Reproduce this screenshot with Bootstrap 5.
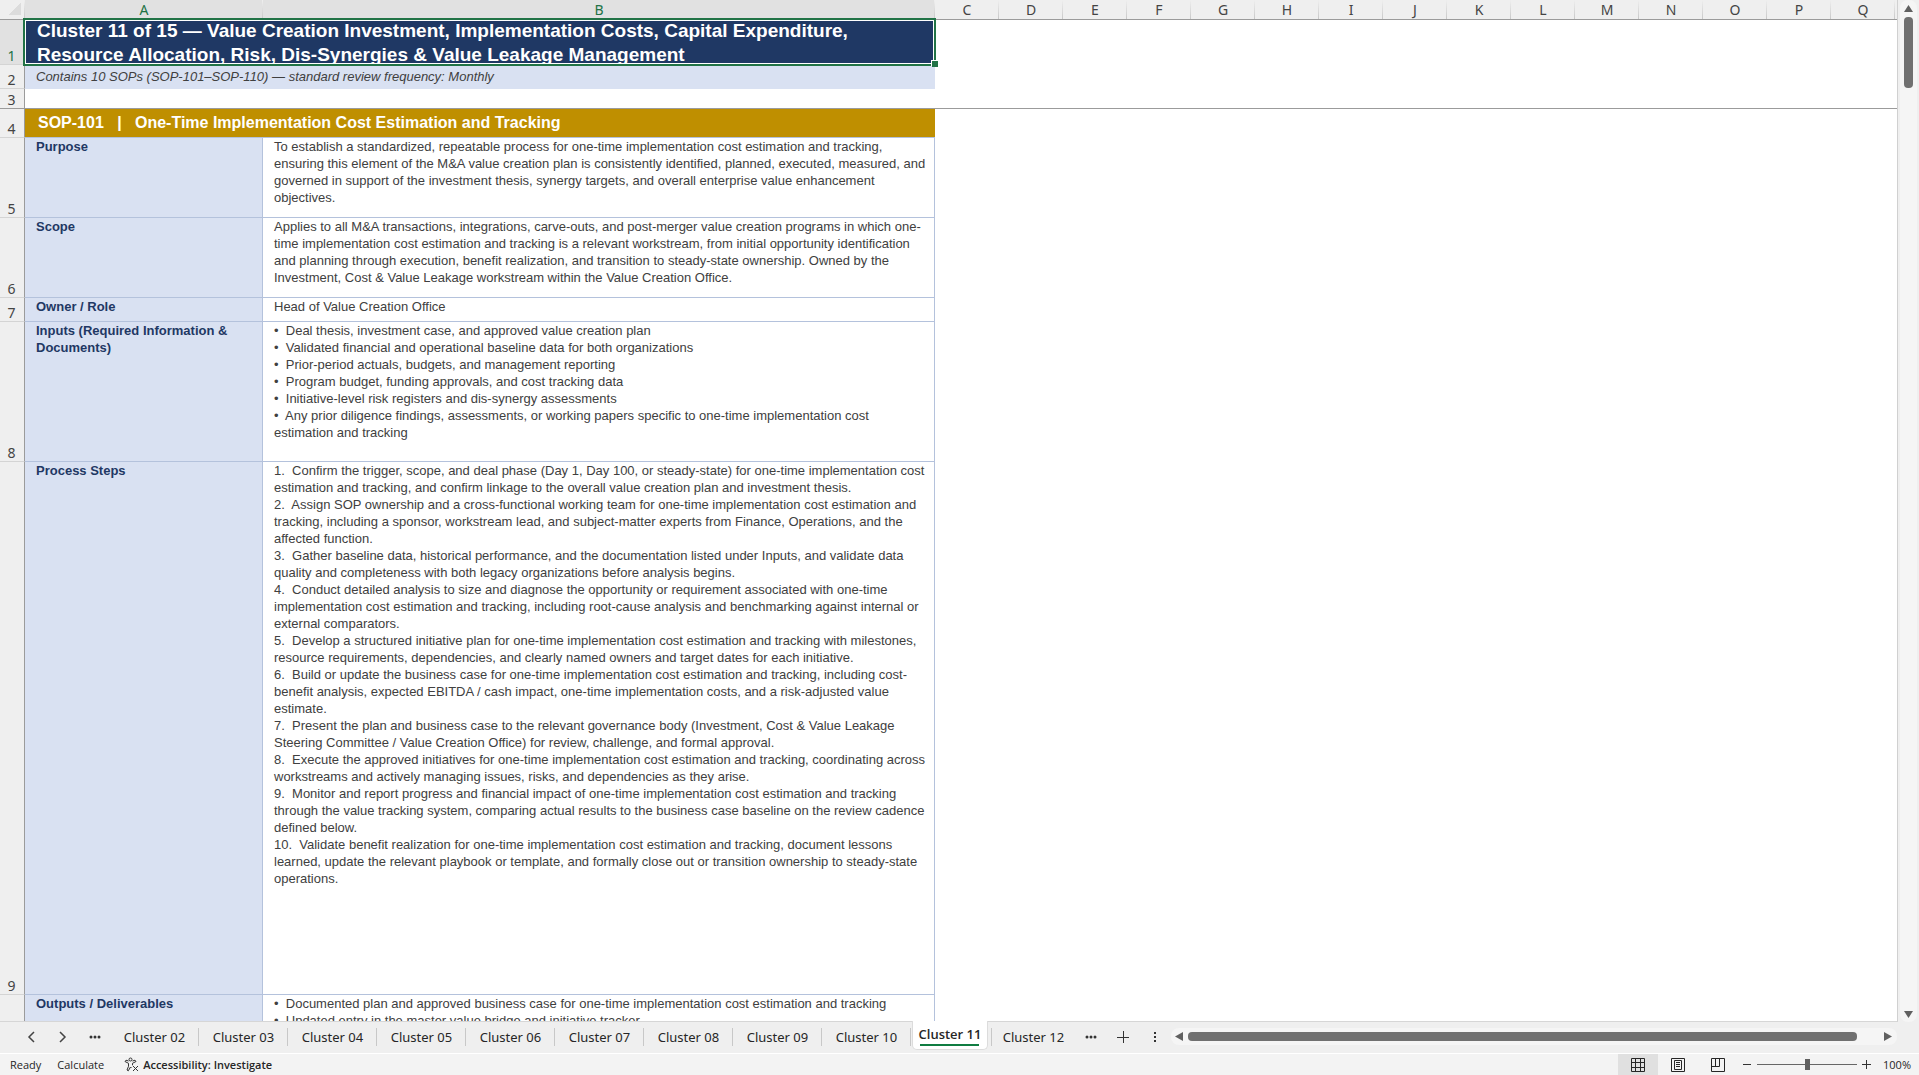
<!DOCTYPE html>
<html lang="en">
<head>
<meta charset="utf-8">
<meta name="viewport" content="width=device-width, initial-scale=1">
<title>Cluster 11</title>
<link href="https://cdn.jsdelivr.net/npm/bootstrap@5.3.0/dist/css/bootstrap.min.css" rel="stylesheet">
<style>
  :root { --ui: "Noto Sans", "Open Sans", sans-serif; --cell: "Liberation Sans", Arial, sans-serif; --line: #b4c2dc; --chrome: #efefef; --green: #217346; }
  body { font-family: var(--ui); background: var(--chrome); color: #262626; }
  .workspace { min-height: 0; }
  .sheet-view { min-height: 0; min-width: 0; background: #fff; border-right: 1px solid #d0d0d0; border-bottom: 1px solid #d6d6d6; }
  .sheet { --bs-table-bg: transparent; table-layout: fixed; border-collapse: separate; border-spacing: 0; margin: 0; width: 100%; color: #404040; font: 13px/17px var(--cell); }
  .sheet > :not(caption) > * > * { padding: 0; border: 0; vertical-align: top; }
  .sheet .num-col { width: 25px; } .sheet .a-col { width: 238px; } .sheet .b-col { width: 672px; } .sheet .std-col { width: 64px; }
  .sheet > thead > tr > th { height: 20px; padding-top: 1px; font: 14px/17px var(--ui); text-align: center; color: #444; border-bottom: 1px solid #9b9b9b; background: linear-gradient(#efefef, #c8c8c8) right / 1px 100% no-repeat var(--chrome); }
  .sheet > thead > tr > th.picked { background-color: #e1e1e1; color: var(--green); }
  .sheet > thead > tr > th:last-child { background-image: none; }
  .sheet > tbody > tr > th { font: 14px/17px var(--ui); text-align: center; vertical-align: bottom; padding: 0 1px 0 0; color: #444; background: var(--chrome); border-right: 1px solid #9b9b9b; border-bottom: 1px solid #d4d4d4; }
  .sheet > tbody > tr > th.picked { background: #e1e1e1; color: var(--green); }
  .corner { display: block; width: 12px; height: 12px; margin: 2px 0 0 9px; background: linear-gradient(135deg, transparent 50%, #dcdcdc 50%); }
  .sheet > tbody > tr > td.tag { padding-left: 11px; background: #d9e1f2; color: #1f3864; font-weight: 700; border-right: 1px solid var(--line); border-bottom: 1px solid var(--line); }
  .sheet > tbody > tr > td.info { padding-left: 11px; white-space: pre; border-right: 1px solid var(--line); border-bottom: 1px solid var(--line); }
  .sheet > tbody > tr > td.heading { position: relative; background: #1f3864; }
  .heading-text { height: 43px; padding-left: 12px; overflow: hidden; color: #fff; font: 700 19px/24px var(--cell); }
  .heading-text span { display: block; margin-top: -1px; white-space: pre; }
  .selection { position: absolute; inset: -2px -1px -1px -2px; border: 2px solid var(--green); box-shadow: inset 0 0 0 1px #fff; }
  .selection::after { content: ""; position: absolute; right: -4px; bottom: -3px; width: 6px; height: 6px; background: var(--green); box-shadow: -1px -1px 0 #fff; }
  .sheet > tbody > tr > td.subtitle { padding: 3px 0 0 11px; background: #d9e1f2; font-style: italic; }
  .sheet > tbody > tr.frozen > * { border-bottom: 1px solid #9b9b9b; }
  .sheet > tbody > tr > td.sop { padding: 5px 0 0 13px; white-space: pre; background: #bf8f00; color: #fff; font-weight: 700; font-size: 16px; border-bottom: 1px solid var(--line); }
  .r1 { height: 45px; } .r2 { height: 24px; } .r3 { height: 20px; } .r4 { height: 29px; } .r5 { height: 80px; } .r8 { height: 140px; } .r9 { height: 533px; }

  .v-scroll { flex: none; width: 17px; margin: 0 2px; padding: 5px 0 4px; background: #f5f5f5; border-radius: 8px; }
  .v-thumb { width: 9px; height: 71px; margin-top: 5px; border-radius: 4px; background: #707070; }
  .tab-strip { height: 31px; padding: 0 22px 2px 0; }
  .bar-btn { flex: none; border: 0; padding: 0; background: none; color: #262626; display: flex; align-items: center; justify-content: center; }
  .step-btn { width: 30px; } .step-btn.wide { width: 34px; }
  .page-tab { width: 89px; height: 29px; font-size: 13px; line-height: 18px; position: relative; }
  .page-tab::after { content: ""; position: absolute; right: 0; top: 6px; height: 18px; width: 1px; background: #c8c8c8; }
  .page-tab.current { align-self: flex-start; width: 76px; margin: -1px 3px 0 1px; padding-bottom: 2px; background: #fff; border: 1px solid #dcdcdc; border-top: 0; border-radius: 0 0 5px 5px; font-family: "Open Sans", var(--ui); font-weight: 600; }
  .page-tab.current::after { left: 7px; right: 8px; top: 23px; width: auto; height: 2px; background: #107c41; }
  .page-tab.current + .page-tab { width: 85px; }
  .page-tab.current + .page-tab::after { right: auto; left: 0; }
  .kebab { margin: 0 15px 0 14px; }
  .h-scroll { height: 17px; padding: 0 5px 0 4px; background: #f5f5f5; border-radius: 8px; }
  .h-thumb { height: 9px; margin: 0 27px 0 5px; border-radius: 4px; background: #707070; }
  .status { height: 22px; padding: 0 8px 0 10px; border-top: 1px solid #fff; background: #f3f3f3; font: 11px/16px "Open Sans", var(--ui); }
  .view-btn { width: 40px; height: 21px; }
  .view-btn.on { background: #e0e0e0; }
  .zoom-range { -webkit-appearance: none; appearance: none; width: 100px; height: 12px; margin: 0 5px; background: linear-gradient(#666, #666) center / 100% 1px no-repeat; }
  .zoom-range::-webkit-slider-thumb { -webkit-appearance: none; width: 5px; height: 11px; background: #5f5f5f; }
  .zoom-value { flex: none; margin-left: 12px; }
  svg { display: block; flex: none; }
</style>
<script src="https://cdn.jsdelivr.net/npm/bootstrap@5.3.0/dist/js/bootstrap.bundle.min.js"></script>
</head>
<body class="vh-100 d-flex flex-column overflow-hidden">
<main class="workspace d-flex flex-fill">
  <div class="sheet-view flex-fill overflow-hidden">
    <table class="table sheet">
      <colgroup><col class="num-col"><col class="a-col"><col class="b-col"><col class="std-col" span="15"><col></colgroup>
      <thead><tr><th><span class="corner"></span></th><th class="picked">A</th><th class="picked">B</th><th>C</th><th>D</th><th>E</th><th>F</th><th>G</th><th>H</th><th>I</th><th>J</th><th>K</th><th>L</th><th>M</th><th>N</th><th>O</th><th>P</th><th>Q</th><th></th></tr></thead>
      <tbody>
        <tr class="r1"><th class="picked">1</th><td class="heading" colspan="2"><div class="heading-text"><span>Cluster 11 of 15 — Value Creation Investment, Implementation Costs, Capital Expenditure,
Resource Allocation, Risk, Dis-Synergies &amp; Value Leakage Management</span></div><div class="selection"></div></td><td colspan="16"></td></tr>
        <tr class="r2"><th>2</th><td class="subtitle" colspan="2">Contains 10 SOPs (SOP-101–SOP-110) — standard review frequency: Monthly</td><td colspan="16"></td></tr>
        <tr class="r3 frozen"><th>3</th><td colspan="2"></td><td colspan="16"></td></tr>
        <tr class="r4"><th>4</th><td class="sop" colspan="2">SOP-101   |   One-Time Implementation Cost Estimation and Tracking</td><td colspan="16"></td></tr>
        <tr class="r5"><th>5</th><td class="tag">Purpose</td><td class="info">To establish a standardized, repeatable process for one-time implementation cost estimation and tracking,
ensuring this element of the M&amp;A value creation plan is consistently identified, planned, executed, measured, and
governed in support of the investment thesis, synergy targets, and overall enterprise value enhancement
objectives.</td><td colspan="16"></td></tr>
        <tr class="r5"><th>6</th><td class="tag">Scope</td><td class="info">Applies to all M&amp;A transactions, integrations, carve-outs, and post-merger value creation programs in which one-
time implementation cost estimation and tracking is a relevant workstream, from initial opportunity identification
and planning through execution, benefit realization, and transition to steady-state ownership. Owned by the
Investment, Cost &amp; Value Leakage workstream within the Value Creation Office.</td><td colspan="16"></td></tr>
        <tr class="r2"><th>7</th><td class="tag">Owner / Role</td><td class="info">Head of Value Creation Office</td><td colspan="16"></td></tr>
        <tr class="r8"><th>8</th><td class="tag">Inputs (Required Information &amp;<br>Documents)</td><td class="info">•  Deal thesis, investment case, and approved value creation plan
•  Validated financial and operational baseline data for both organizations
•  Prior-period actuals, budgets, and management reporting
•  Program budget, funding approvals, and cost tracking data
•  Initiative-level risk registers and dis-synergy assessments
•  Any prior diligence findings, assessments, or working papers specific to one-time implementation cost
estimation and tracking</td><td colspan="16"></td></tr>
        <tr class="r9"><th>9</th><td class="tag">Process Steps</td><td class="info">1.  Confirm the trigger, scope, and deal phase (Day 1, Day 100, or steady-state) for one-time implementation cost
estimation and tracking, and confirm linkage to the overall value creation plan and investment thesis.
2.  Assign SOP ownership and a cross-functional working team for one-time implementation cost estimation and
tracking, including a sponsor, workstream lead, and subject-matter experts from Finance, Operations, and the
affected function.
3.  Gather baseline data, historical performance, and the documentation listed under Inputs, and validate data
quality and completeness with both legacy organizations before analysis begins.
4.  Conduct detailed analysis to size and diagnose the opportunity or requirement associated with one-time
implementation cost estimation and tracking, including root-cause analysis and benchmarking against internal or
external comparators.
5.  Develop a structured initiative plan for one-time implementation cost estimation and tracking with milestones,
resource requirements, dependencies, and clearly named owners and target dates for each initiative.
6.  Build or update the business case for one-time implementation cost estimation and tracking, including cost-
benefit analysis, expected EBITDA / cash impact, one-time implementation costs, and a risk-adjusted value
estimate.
7.  Present the plan and business case to the relevant governance body (Investment, Cost &amp; Value Leakage
Steering Committee / Value Creation Office) for review, challenge, and formal approval.
8.  Execute the approved initiatives for one-time implementation cost estimation and tracking, coordinating across
workstreams and actively managing issues, risks, and dependencies as they arise.
9.  Monitor and report progress and financial impact of one-time implementation cost estimation and tracking
through the value tracking system, comparing actual results to the business case baseline on the review cadence
defined below.
10.  Validate benefit realization for one-time implementation cost estimation and tracking, document lessons
learned, update the relevant playbook or template, and formally close out or transition ownership to steady-state
operations.</td><td colspan="16"></td></tr>
        <tr class="r8"><th></th><td class="tag">Outputs / Deliverables</td><td class="info">•  Documented plan and approved business case for one-time implementation cost estimation and tracking
•  Updated entry in the master value bridge and initiative tracker</td><td colspan="16"></td></tr>
      </tbody>
    </table>
  </div>
  <div class="v-scroll d-flex flex-column align-items-center">
    <svg width="9" height="7"><path d="M4.500 0L9 7H0z" fill="#606060"/></svg>
    <div class="v-thumb"></div>
    <svg class="mt-auto" width="9" height="7"><path d="M0 0h9L4.500 7z" fill="#606060"/></svg>
  </div>
</main>
<nav class="tab-strip d-flex align-items-center" aria-label="Sheets">
  <button class="bar-btn step-btn ms-3" aria-label="Previous"><svg width="8" height="12" fill="none" stroke="#444" stroke-width="1.500"><path d="M7 1L2 6l5 5"/></svg></button>
  <button class="bar-btn step-btn wide" aria-label="Next"><svg width="8" height="12" fill="none" stroke="#444" stroke-width="1.500"><path d="M1 1l5 5-5 5"/></svg></button>
  <button class="bar-btn step-btn" aria-label="More sheets before"><svg width="12" height="4" fill="#333"><circle cx="2" cy="2" r="1.500"/><circle cx="6" cy="2" r="1.500"/><circle cx="10" cy="2" r="1.500"/></svg></button>
  <button class="bar-btn page-tab">Cluster 02</button>
  <button class="bar-btn page-tab">Cluster 03</button>
  <button class="bar-btn page-tab">Cluster 04</button>
  <button class="bar-btn page-tab">Cluster 05</button>
  <button class="bar-btn page-tab">Cluster 06</button>
  <button class="bar-btn page-tab">Cluster 07</button>
  <button class="bar-btn page-tab">Cluster 08</button>
  <button class="bar-btn page-tab">Cluster 09</button>
  <button class="bar-btn page-tab">Cluster 10</button>
  <button class="bar-btn page-tab current">Cluster 11</button>
  <button class="bar-btn page-tab">Cluster 12</button>
  <button class="bar-btn step-btn" aria-label="More sheets after"><svg width="12" height="4" fill="#333"><circle cx="2" cy="2" r="1.500"/><circle cx="6" cy="2" r="1.500"/><circle cx="10" cy="2" r="1.500"/></svg></button>
  <button class="bar-btn step-btn wide" aria-label="New sheet"><svg width="12" height="12" stroke="#333"><path d="M6.500 0v12M0 6.500h12"/></svg></button>
  <svg class="kebab" width="2" height="12" fill="#333"><path d="M0 1h2v2H0zM0 5h2v2H0zM0 9h2v2H0z"/></svg>
  <div class="h-scroll flex-fill d-flex align-items-center">
    <svg width="8" height="9"><path d="M8 0v9L0 4.500z" fill="#606060"/></svg>
    <div class="h-thumb flex-fill"></div>
    <svg width="8" height="9"><path d="M0 0v9l8-4.500z" fill="#606060"/></svg>
  </div>
</nav>
<footer class="status d-flex align-items-center">
  <span>Ready</span>
  <span class="ms-3">Calculate</span>
  <button class="bar-btn ms-3 ps-1 gap-1 fw-semibold"><svg width="15" height="15" viewBox="0 0 15 15" fill="none" stroke="#333"><circle cx="6.500" cy="2.500" r="1.500"/><path d="M4.500 4L2 3.200 1 4.500l3.500 1.800v3L3 13l1.300.8L6.500 10l1 1M8.500 4l2.500-.8 1 1.300-3.500 1.800v2M9 9l5 5M14 9l-5 5"/></svg>Accessibility: Investigate</button>
  <button class="bar-btn view-btn on ms-auto" aria-label="Normal"><svg width="14" height="14" fill="none" stroke="#262626"><path d="M.5.5h13v13H.5zM.5 4.500h13M.5 9.500h13M4.500.5v13M9.500.5v13"/></svg></button>
  <button class="bar-btn view-btn" aria-label="Page layout"><svg width="14" height="14" fill="none" stroke="#262626"><path d="M.5.5h13v13H.5zM3.500 2.500h7v9h-7zM5 4.500h4M5 6.500h4M5 8.500h4"/></svg></button>
  <button class="bar-btn view-btn" aria-label="Page break preview"><svg width="14" height="14" fill="none" stroke="#262626"><path d="M.5.5h13v13H.5zM.5 8.500h8v-8M4.500.5v8"/></svg></button>
  <button class="bar-btn ms-1" aria-label="Zoom out"><svg width="10" height="9" stroke="#333"><path d="M1 4.500h8"/></svg></button>
  <input class="zoom-range" type="range" aria-label="Zoom" min="0" max="200" value="100">
  <button class="bar-btn" aria-label="Zoom in"><svg width="9" height="9" stroke="#333"><path d="M0 4.500h9M4.500 0v9"/></svg></button>
  <span class="zoom-value">100%</span>
</footer>
</body>
</html>
